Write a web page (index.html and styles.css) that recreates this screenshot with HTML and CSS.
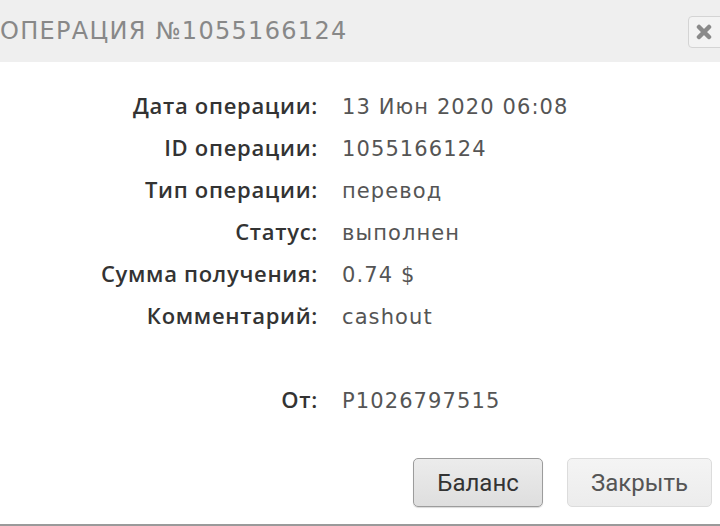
FILE: index.html
```html
<!DOCTYPE html>
<html lang="ru">
<head>
  <meta charset="UTF-8" />
  <title>Операция №1055166124</title>
  <meta name="viewport" content="width=device-width, initial-scale=1" />
  <link rel="stylesheet" href="styles.css">
</head>
<body>

  <div class="dialog">
    <div class="dialog-head">
      <span class="dialog-title">ОПЕРАЦИЯ №1055166124</span>
      <button class="close-x" title="Закрыть">
        <svg width="16" height="16" viewBox="0 0 16 16">
          <path d="M3 3 L13 13 M13 3 L3 13" stroke="#8a8a8a" stroke-width="4.5" stroke-linecap="round" />
        </svg>
      </button>
    </div>

    <div class="details">
      <div class="label">Дата операции:</div>
      <div class="value">13 Июн 2020 06:08</div>

      <div class="label">ID операции:</div>
      <div class="value">1055166124</div>

      <div class="label">Тип операции:</div>
      <div class="value">перевод</div>

      <div class="label">Статус:</div>
      <div class="value">выполнен</div>

      <div class="label">Сумма получения:</div>
      <div class="value">0.74 $</div>

      <div class="label">Комментарий:</div>
      <div class="value">cashout</div>

      <div class="spacer"></div>

      <div class="label">От:</div>
      <div class="value">P1026797515</div>
    </div>

    <div class="dialog-buttons">
      <button class="btn btn-main">Баланс</button>
      <button class="btn">Закрыть</button>
    </div>
  </div>

</body>
</html>
```

FILE: styles.css
```css
body {
  margin: 0;
  background: #fff;
  font-family: 'DejaVu Sans', 'Liberation Sans', sans-serif;
  overflow: hidden;
}

.dialog {
  height: 526px;
  box-sizing: border-box;
  border-bottom: 2px solid #9a9a9a;
  display: flex;
  flex-direction: column;
}

.dialog-head {
  height: 62px;
  background: #efefef;
  display: flex;
  align-items: center;
  justify-content: space-between;
  box-sizing: border-box;
}

.dialog-title {
  font-size: 24px;
  letter-spacing: 1.3px;
  color: #888;
}

.close-x {
  width: 36px;
  height: 32px;
  margin-right: -4px;
  margin-top: 2px;
  border: 1px solid #d4d4d4;
  border-radius: 4px;
  background: #f3f3f3;
  padding: 0 4px 0 0;
  display: flex;
  align-items: center;
  justify-content: center;
  cursor: pointer;
}

.details {
  display: grid;
  grid-template-columns: 318px 1fr;
  grid-auto-rows: 42px;
  column-gap: 24px;
  align-items: baseline;
  padding-top: 28px;
  font-size: 21px;
}

.label {
  text-align: right;
  color: #333;
  font-family: 'Open Sans', 'DejaVu Sans', sans-serif;
  font-weight: 600;
  font-size: 22px;
  letter-spacing: 0.7px;
}

.value {
  color: #555;
  letter-spacing: 1.1px;
}

.spacer {
  grid-column: 1 / 3;
}

.dialog-buttons {
  display: flex;
  justify-content: flex-end;
  gap: 24px;
  padding: 32px 8px 0 0;
}

.btn {
  height: 49px;
  padding: 0 23px;
  font-family: Roboto, 'Liberation Sans', sans-serif;
  font-size: 24px;
  color: #555;
  background: linear-gradient(#f4f4f4, #ececec);
  border: 1px solid #dcdcdc;
  border-radius: 5px;
  cursor: pointer;
}

.btn-main {
  width: 130px;
  color: #333;
  background: linear-gradient(#ececec, #dedede);
  border: 1px solid #9c9c9c;
  box-shadow: 0 1px 1px rgba(0, 0, 0, 0.15);
}
```
